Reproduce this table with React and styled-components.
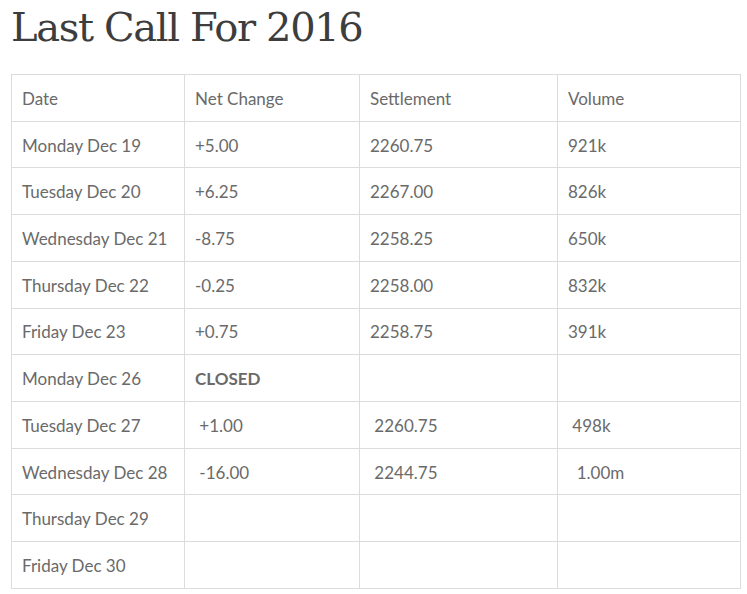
import React from "react";
import styled, { createGlobalStyle } from "styled-components";

const Global = createGlobalStyle`
  html, body { margin: 0; padding: 0; background: #fff; }
  body { font-family: "Lato", "Open Sans", sans-serif; }
`;

const Page = styled.div`
  padding: 0 7px 0 11px;
`;

const Title = styled.h1`
  margin: 0;
  padding-top: 3px;
  height: 72px;
  box-sizing: border-box;
  font-family: "DejaVu Serif", "Liberation Serif", serif;
  font-weight: 400;
  font-size: 40px;
  line-height: 48px;
  color: #3d3d3d;
  letter-spacing: -1.35px;
`;

const Table = styled.table`
  border-collapse: collapse;
  table-layout: fixed;
  width: 729px;
  margin-top: 2px;
`;

const Cell = styled.td`
  border: 1px solid #dcdcdc;
  height: 46.73px;
  padding: 2px 10px 0;
  box-sizing: border-box;
  font-size: 17px;
  line-height: 22px;
  color: #6a6a6a;
  font-weight: ${(p) => (p.$bold ? 700 : 400)};
  white-space: pre;
  vertical-align: middle;
`;

const cols = [173, 175, 198, 183];

const rows = [
  ["Date", "Net Change", "Settlement", "Volume"],
  ["Monday Dec 19", "+5.00", "2260.75", "921k"],
  ["Tuesday Dec 20", "+6.25", "2267.00", "826k"],
  ["Wednesday Dec 21", "-8.75", "2258.25", "650k"],
  ["Thursday Dec 22", "-0.25", "2258.00", "832k"],
  ["Friday Dec 23", "+0.75", "2258.75", "391k"],
  ["Monday Dec 26", "CLOSED", "", ""],
  ["Tuesday Dec 27", "\u00a0+1.00", "\u00a02260.75", "\u00a0498k"],
  ["Wednesday Dec 28", "\u00a0-16.00", "\u00a02244.75", "\u00a0\u00a01.00m"],
  ["Thursday Dec 29", "", "", ""],
  ["Friday Dec 30", "", "", ""],
];

export default function App() {
  return (
    <Page>
      <Global />
      <Title>Last Call For 2016</Title>
      <Table>
        <colgroup>
          {cols.map((w, i) => (
            <col key={i} style={{ width: w }} />
          ))}
        </colgroup>
        <tbody>
          {rows.map((r, i) => (
            <tr key={i}>
              {r.map((c, j) => (
                <Cell key={j} $bold={c === "CLOSED"}>
                  {c}
                </Cell>
              ))}
            </tr>
          ))}
        </tbody>
      </Table>
    </Page>
  );
}
